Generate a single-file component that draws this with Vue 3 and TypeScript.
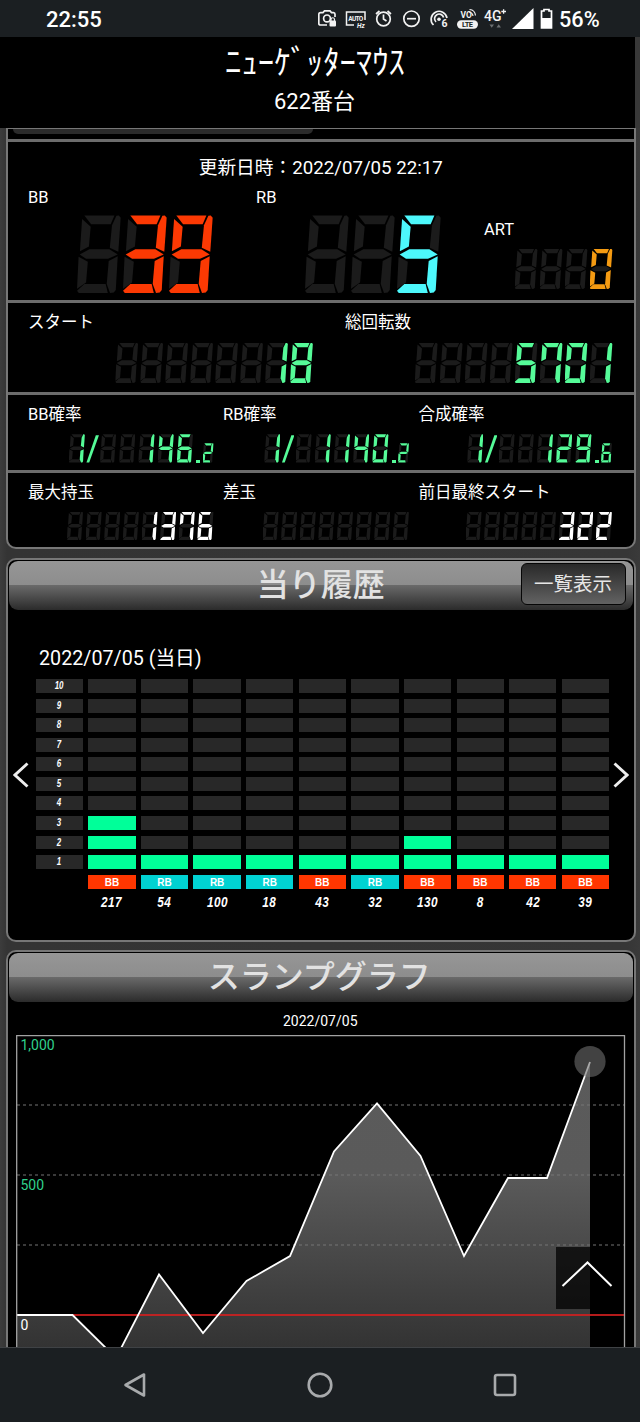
<script setup lang="ts">
import { defineComponent, h } from 'vue'

type Hit = { kind: 'BB' | 'RB'; games: number; level: number }

const segmentMap: Record<string, string> = {
  '0': 'abcdef', '1': 'bc', '2': 'abged', '3': 'abgcd', '4': 'fgbc',
  '5': 'afgcd', '6': 'afgecd', '7': 'fabc', '8': 'abcdefg', '9': 'abcdfg', ' ': '',
}

// Seven-segment LED read-out; unlit segments stay faintly visible.
const Led = defineComponent({
  props: { value: { type: String, required: true }, size: { type: String, required: true } },
  setup(props) {
    return () => h('span', { class: ['led', props.size], role: 'img', 'aria-label': props.value.trim() },
      props.value.split('').map((ch, i, all) => {
        if (ch === '/') return h('span', { class: 'led-slash' })
        if (ch === '.') return h('span', { class: 'led-dot' })
        return h('span', { class: ['led-digit', { fraction: all[i - 1] === '.' }] },
          'abcdefg'.split('').map(s => h('i', { class: ['seg', 'seg-' + s, { on: segmentMap[ch].includes(s) }] })))
      }))
  },
})

const rates = [
  { label: 'BB確率', value: '1/  146.2' },
  { label: 'RB確率', value: '1/ 1140.2' },
  { label: '合成確率', value: '1/  129.6' },
]
const totals = [
  { label: '最大持玉', value: '    1376' },
  { label: '差玉', value: '        ' },
  { label: '前日最終スタート', value: '     322' },
]
const hits: Hit[] = [
  { kind: 'BB', games: 217, level: 3 }, { kind: 'RB', games: 54, level: 1 },
  { kind: 'RB', games: 100, level: 1 }, { kind: 'RB', games: 18, level: 1 },
  { kind: 'BB', games: 43, level: 1 }, { kind: 'RB', games: 32, level: 1 },
  { kind: 'BB', games: 130, level: 2 }, { kind: 'BB', games: 8, level: 1 },
  { kind: 'BB', games: 42, level: 1 }, { kind: 'BB', games: 39, level: 1 },
]
const levels = [10, 9, 8, 7, 6, 5, 4, 3, 2, 1]
const points = '0.5,280 56.5,280 100,323 143,239.5 187,298 230.5,246 274,221 318,116.5 361,68.5 404.5,121 448,221 492,143 531,143 574,27'
</script>

<template>
  <div class="screen">
    <div class="status">
      <span class="clock">22:55</span>
      <svg class="icons" width="240" height="37" viewBox="0 0 240 37" fill="none" stroke="#f2f2f2" stroke-width="1.7">
        <path d="M10 25H3.500Q1.800 25 1.800 23.300V14.300Q1.800 12.600 3.500 12.600H6L7.500 10.900H13L14.500 12.600H16.500Q18 12.600 18 14.300V17" transform="translate(-1 0)" />
        <circle cx="9" cy="18.400" r="3.400" />
        <rect x="11.500" y="20.500" width="6.500" height="6" rx="1" fill="#f2f2f2" stroke="none" />
        <path d="M13 21V19.500a1.700 1.700 0 0 1 3.500 0V21" stroke-width="1.200" />
        <path d="M36 25H28.500V12H47V20" stroke-width="1.500" />
        <text x="30.300" y="20.500" class="mini" font-size="6.500" textLength="15">AUTO</text>
        <text x="39" y="27.700" class="mini" font-size="6.500" font-style="italic">Hz</text>
        <circle cx="65.500" cy="19" r="6.800" /><path d="M65.500 14.500V19L68.500 21M58 14L61.500 11M73 14L69.500 11" />
        <circle cx="93.500" cy="18.700" r="7.700" /><path d="M89 18.700H98" />
        <path d="M115.500 25A8 8 0 1 1 129 18M118 22A4.600 4.600 0 1 1 125.600 17.500" />
        <circle cx="121" cy="19.300" r="1.800" fill="#f2f2f2" stroke="none" />
        <text x="123.500" y="26.500" class="mini" font-size="10.500">6</text>
        <text x="142.500" y="18" class="mini" font-size="8.500">VO</text>
        <path d="M151 12Q154.500 12.500 155 16M151.500 9.500Q157 10 157.500 15.500" stroke-width="1.200" />
        <rect x="139" y="20.300" width="21" height="8.400" rx="4.200" fill="#f2f2f2" stroke="none" />
        <text x="144" y="27.300" class="mini dark" font-size="7.500" textLength="11">LTE</text>
        <text x="166" y="20.500" class="net" font-size="14">4G</text>
        <path d="M183.300 11.500H188M185.600 9.200V13.800" stroke-width="1.300" />
        <path d="M171.500 24.500H176L173.700 27.800ZM178.500 27.500H183L180.700 24.200Z" fill="#6d7072" stroke="none" />
        <path d="M194 29H215.500V8Z" fill="#fff" stroke="none" />
        <path d="M226 9.500H231V11H233.500V28H223.500V11H226Z" stroke="#fff" />
        <path d="M223.500 18H233.500V28H223.500Z" fill="#fff" stroke="none" />
      </svg>
      <span class="battery">56%</span>
    </div>

    <header class="machine">
      <h1>ﾆｭｰｹﾞｯﾀｰﾏｳｽ</h1>
      <p>622番台</p>
    </header>

    <main>
      <section class="panel data">
        <div class="stub"><div class="stub-tab"></div></div>
        <div class="block counts">
          <p class="updated">更新日時：2022/07/05 22:17</p>
          <div class="row">
            <div class="item bb"><span class="label">BB</span><Led class="red" size="large" value=" 39" /></div>
            <div class="item rb"><span class="label">RB</span><Led class="cyan" size="large" value="  5" /></div>
            <div class="item art"><span class="label">ART</span><Led class="orange" size="medium" value="   0" /></div>
          </div>
        </div>
        <div class="block starts">
          <div class="item"><span class="label">スタート</span><Led class="green" size="medium" value="      18" /></div>
          <div class="item"><span class="label">総回転数</span><Led class="green" size="medium" value="    5701" /></div>
        </div>
        <div class="block thirds">
          <div v-for="r in rates" :key="r.label" class="item">
            <span class="label">{{ r.label }}</span><Led class="green" size="small" :value="r.value" />
          </div>
        </div>
        <div class="block thirds last">
          <div v-for="t in totals" :key="t.label" class="item">
            <span class="label">{{ t.label }}</span><Led class="white" size="small plain" :value="t.value" />
          </div>
        </div>
      </section>

      <section class="panel history">
        <div class="title"><h2>当り履歴</h2><button>一覧表示</button></div>
        <p class="day">2022/07/05 (当日)</p>
        <div class="carousel">
          <svg class="arrow" width="16" height="26" viewBox="0 0 16 26"><path d="M14.500 1.500L2 13L14.500 24.500" /></svg>
          <div class="grid">
            <template v-for="n in levels" :key="n">
              <div class="cell num"><span>{{ n }}</span></div>
              <div v-for="(hit, i) in hits" :key="i" class="cell" :class="{ lit: hit.level >= n }"></div>
            </template>
            <span></span>
            <div v-for="(hit, i) in hits" :key="'k' + i" class="kind" :class="hit.kind.toLowerCase()">{{ hit.kind }}</div>
            <span></span>
            <div v-for="(hit, i) in hits" :key="'g' + i" class="games"><span>{{ hit.games }}</span></div>
          </div>
          <svg class="arrow right" width="16" height="26" viewBox="0 0 16 26"><path d="M1.500 1.500L14 13L1.500 24.500" /></svg>
        </div>
      </section>

      <section class="panel slump">
        <div class="title"><h2>スランプグラフ</h2></div>
        <p class="graph-date">2022/07/05</p>
        <svg class="graph" width="610" height="330" viewBox="0 0 610 330">
          <defs>
            <linearGradient id="area" x1="0" y1="0" x2="0" y2="330" gradientUnits="userSpaceOnUse">
              <stop offset="0" stop-color="#5b5b5b" /><stop offset=".43" stop-color="#5a5a5a" />
              <stop offset=".96" stop-color="#323232" /><stop offset="1" stop-color="#303030" />
            </linearGradient>
          </defs>
          <polygon :points="points + ' 574,330 0.5,330'" fill="url(#area)" />
          <path d="M1 70H608M1 140H608M1 210H608" stroke="#777" stroke-opacity=".65" stroke-width="1.300" stroke-dasharray="3 3" />
          <path d="M0 280H609" stroke="#d42020" stroke-opacity=".85" stroke-width="1.800" />
          <polyline :points="points" fill="none" stroke="#fff" stroke-width="1.800" />
          <path d="M.7 330V.5H608.500V330" fill="none" stroke="#a2a2a2" stroke-width="1.300" />
          <circle cx="574" cy="26.500" r="15.600" fill="#6e6e6e" fill-opacity=".6" />
          <text x="4.500" y="15" fill="#30d08c">1,000</text>
          <text x="4.500" y="155" fill="#30d08c">500</text>
          <text x="4.500" y="295" fill="#fff">0</text>
        </svg>
      </section>
      <div class="to-top">
        <svg width="62" height="62" viewBox="0 0 62 62"><path d="M6.500 39L31.500 15.500L55.500 39" fill="none" stroke="#fff" stroke-width="2" /></svg>
      </div>
    </main>

    <nav>
      <svg width="24" height="26" viewBox="0 0 24 26"><path d="M21 2.500V23.500L2.500 13Z" /></svg>
      <svg width="26" height="26" viewBox="0 0 26 26"><circle cx="13" cy="13" r="11.300" /></svg>
      <svg width="24" height="26" viewBox="0 0 24 26"><rect x="2" y="3" width="20" height="20" rx="2" /></svg>
    </nav>
  </div>
</template>

<style scoped>
* { box-sizing: border-box; }
.screen {
  width: 640px; height: 1422px; overflow: hidden; display: flex; flex-direction: column;
  background: #383838; color: #fff; font-family: Roboto, "Noto Sans CJK JP", sans-serif;
}
p, h1, h2 { margin: 0; font-weight: 400; }
.status { height: 37px; flex: none; display: flex; align-items: center; background: #1b1f22; padding-left: 46px; }
.clock { width: 272px; font-size: 22px; font-weight: 500; line-height: 37px; padding-top: 2px; }
.battery { font-size: 21.700px; font-weight: 500; padding-top: 2px; margin-left: 1px; }
.mini { font-family: Roboto, sans-serif; font-weight: 700; fill: #f2f2f2; stroke: none; }
.mini.dark { fill: #1b1f22; }
.net { font-weight: 500; fill: #f2f2f2; stroke: none; }
.machine { width: 635px; height: 91px; flex: none; background: #000; text-align: center; }
.machine h1 { font-size: 32.700px; line-height: 52px; height: 51px; padding-right: 5px; }
.machine p { font-size: 22px; line-height: 28px; padding-right: 6px; }
main { position: relative; flex: 1; overflow: hidden; padding-left: 6px; background: linear-gradient(90deg, #3c3c3c, #343434 7px, #363636 98%, #3a3a3a); }
.panel { width: 629.500px; border: 2px solid #777; border-radius: 10px; background: #000; overflow: hidden; }
.data { height: 421px; border-top-width: 1px; border-radius: 0 0 10px 10px; }
.stub { height: 10px; padding-left: 5px; }
.stub-tab { width: 300px; height: 5px; background: #2b2b2b; border-radius: 0 0 8px 8px; }
.block { border-top: 3px solid #6c6c6c; padding-left: 20px; }
.item { display: flex; flex-direction: column; }
.label { font-size: 16.500px; line-height: 20px; white-space: nowrap; }
.counts { height: 161px; padding-top: 15px; }
.updated { margin-left: -20px; text-align: center; font-size: 18.700px; line-height: 22px; height: 30px; }
.counts .row { display: flex; }
.counts .item { width: 185px; height: 107px; margin: -1px 43px 0 0; justify-content: space-between; }
.counts .label { margin-top: 2px; }
.counts .art { width: 128.500px; margin: 31px 0 0; height: 71px; }
.counts .art .label { margin-top: 2px; }
.starts { height: 92px; display: flex; padding-top: 10px; gap: 32px; }
.starts .item { width: 285px; }
.starts .item + .item { width: 267.500px; }
.starts .led { margin-top: 9.500px; }
.thirds { height: 78px; display: grid; grid-template-columns: 185.500px 186px 193.500px; column-gap: 9.500px; padding-top: 10px; }
.thirds .led { margin-top: 9px; }
.thirds.last .led { margin-top: 8.500px; }
.red { color: #fc3903; } .cyan { color: #4df8fc; } .orange { color: #f59b12; } .green { color: #55fb98; } .white { color: #fff; }

.history { height: 384px; margin-top: 9px; }
.title {
  position: relative; height: 49px; margin: 1px; border-radius: 9px;
  background: linear-gradient(#969696, #8d8d8d 49%, #696969 50%, #2b2b2b);
}
.title h2 { text-align: center; font-size: 32px; line-height: 48px; font-weight: 500; color: #e2e2e2; }
.title button {
  position: absolute; right: 7px; top: 2px; width: 105px; height: 42px; border: 1.500px solid #060606; border-radius: 6px;
  background: linear-gradient(#292929, #626262); color: #e6e6e6; font: 19.500px/38px Roboto, "Noto Sans CJK JP", sans-serif; padding: 2px 0 0;
}
.day { font-size: 19.700px; line-height: 26px; margin: 36px 0 7.400px 31px; }
.carousel { position: relative; padding-left: 27.600px; }
.grid { width: 573.500px; display: grid; grid-template-columns: repeat(11, minmax(0, 1fr)); gap: 5.930px 5.250px; }
.cell { height: 13.600px; background: #282828; }
.cell.lit { background: #00ff99; }
.num, .games { font-family: "Liberation Sans", sans-serif; font-weight: 700; font-style: italic; text-align: center; }
.num span, .games span { display: inline-block; transform: scaleX(.72); }
.num { font-size: 11px; line-height: 12.500px; }
.kind { height: 14.500px; font-family: "Liberation Sans", sans-serif; font-size: 10px; line-height: 15px; font-weight: 700; text-align: center; }
.kind.bb { background: #ff3600; } .kind.rb { background: #00d2d2; }
.games { font-size: 14px; line-height: 15px; letter-spacing: .5px; }
.games span { transform: scaleX(.84); }
.arrow { position: absolute; left: 4.500px; top: 83px; fill: none; stroke: #eee; stroke-width: 2.900; }
.arrow.right { left: auto; right: 4.500px; }

.slump { height: 420px; margin-top: 8px; }
.graph-date { text-align: center; font-size: 14px; line-height: 18px; height: 31.500px; padding-top: 9px; padding-right: 1px; }
.graph { display: block; margin-left: 8px; }
.graph text { font-size: 14px; }
.slump .title h2 { padding-right: 3px; }
.to-top { position: absolute; left: 556px; top: 1119px; width: 62px; height: 62px; background: rgba(0, 0, 0, .73); }
nav {
  height: 75px; flex: none; background: #1b1f22; border-top: 1px solid #3f4245; z-index: 1;
  display: flex; align-items: center; justify-content: space-between; padding: 0 123px 0 123px;
}
nav svg { fill: none; stroke: #a8aaac; stroke-width: 2.600; stroke-linejoin: round; }
</style>

<style>
.led { display: flex; align-self: flex-end; font-size: var(--h); height: 1em; }
.led.large { --h: 78px; --gap: 2px; }
.led.medium { --h: 40.500px; --gap: 2.150px; }
.led.small { --h: 28.600px; --gap: 3.100px; }
.led.small.plain { --gap: 2.500px; }
.led-digit { position: relative; width: .564em; height: 1em; margin-left: var(--gap); flex: none; }
.led-digit:first-child { margin-left: 0; }
.led-digit.fraction { font-size: .680em; align-self: flex-end; margin-left: 2.500px; }
.led-slash { width: 12.500px; height: 1em; margin-left: 1.500px; margin-right: -2px; background: currentColor; clip-path: polygon(0 100%, 22% 100%, 100% 4%, 75% 4%); }
.led-dot { width: 4px; height: 3px; align-self: flex-end; margin-left: 3px; background: currentColor; }
.seg { position: absolute; inset: 0; background: #1b1b1b; }
.seg.on { background: currentColor; }
.seg-a { clip-path: polygon(16.600% .5%, 85% .5%, 76.500% 11.700%, 32% 11.700%); }
.seg-b { clip-path: polygon(89.500% 1%, 95% .5%, 99.200% 3.500%, 96.500% 26%, 93.800% 47%, 74.500% 42%, 79.500% 13%); }
.seg-c { clip-path: polygon(92.500% 53%, 88% 96%, 83.500% 99.500%, 75% 100%, 67.500% 88.500%, 72% 59%); }
.seg-d { clip-path: polygon(0 97%, 16.600% 88.500%, 65% 88.500%, 70% 100%, 4% 100%); }
.seg-e { clip-path: polygon(3.500% 53.500%, 24.500% 60%, 20.500% 86.500%, 0 94.500%); }
.seg-f { clip-path: polygon(11.500% 5%, 31% 15%, 27% 40.500%, 6.500% 46.500%); }
.seg-g { clip-path: polygon(6% 50.500%, 28% 44%, 73.500% 44%, 92.500% 50.500%, 70.500% 56%, 20.500% 56%); }
</style>
